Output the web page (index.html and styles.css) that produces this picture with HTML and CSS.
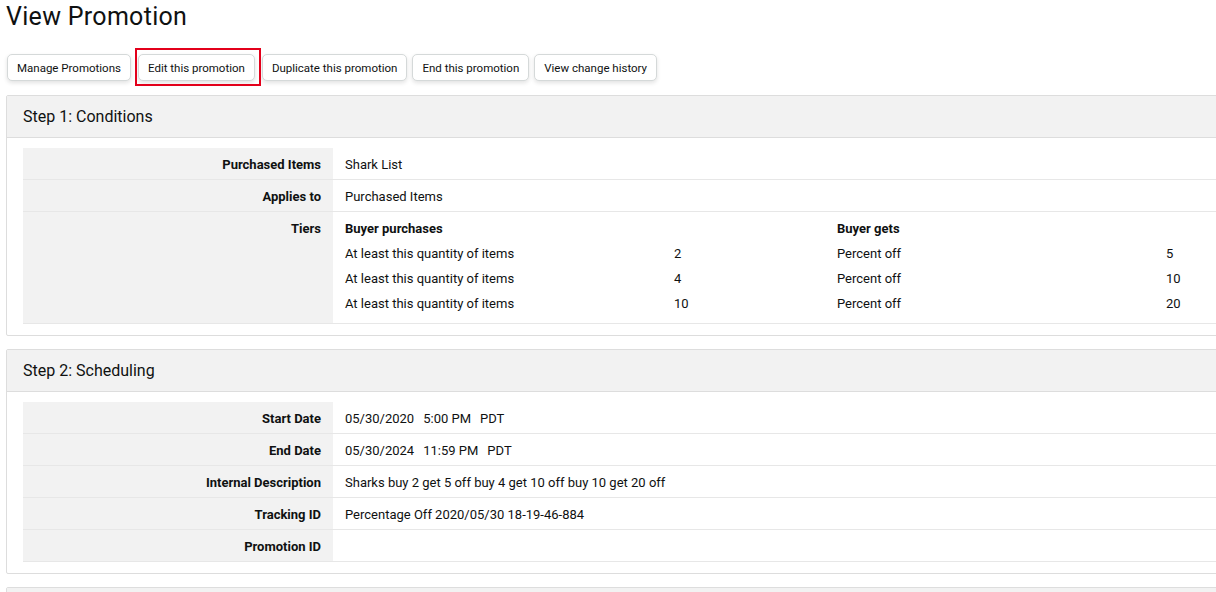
FILE: index.html
```html
<!DOCTYPE html>
<html lang="en">
<head>
    <meta charset="UTF-8">
    <meta name="viewport" content="width=device-width, initial-scale=1.0">
    <title>View Promotion</title>
    <link rel="stylesheet" href="styles.css">
</head>
<body>
    <h1 class="page-title">View Promotion</h1>

    <div class="actions">
        <button class="btn">Manage Promotions</button>
        <span class="highlight"><button class="btn">Edit this promotion</button></span>
        <button class="btn">Duplicate this promotion</button>
        <button class="btn">End this promotion</button>
        <button class="btn">View change history</button>
    </div>

    <div class="card">
        <div class="card-header">Step 1: Conditions</div>
        <table class="details">
            <tr>
                <th>Purchased Items</th>
                <td>Shark List</td>
            </tr>
            <tr>
                <th>Applies to</th>
                <td>Purchased Items</td>
            </tr>
            <tr>
                <th>Tiers</th>
                <td class="tiers-cell">
                    <table class="tiers">
                        <colgroup>
                            <col class="col-name">
                            <col class="col-value">
                            <col class="col-name">
                            <col class="col-value">
                        </colgroup>
                        <tr class="tiers-head">
                            <td colspan="2">Buyer purchases</td>
                            <td colspan="2">Buyer gets</td>
                        </tr>
                        <tr>
                            <td>At least this quantity of items</td>
                            <td>2</td>
                            <td>Percent off</td>
                            <td>5</td>
                        </tr>
                        <tr>
                            <td>At least this quantity of items</td>
                            <td>4</td>
                            <td>Percent off</td>
                            <td>10</td>
                        </tr>
                        <tr>
                            <td>At least this quantity of items</td>
                            <td>10</td>
                            <td>Percent off</td>
                            <td>20</td>
                        </tr>
                    </table>
                </td>
            </tr>
        </table>
    </div>

    <div class="card">
        <div class="card-header">Step 2: Scheduling</div>
        <table class="details">
            <tr>
                <th>Start Date</th>
                <td><span class="part">05/30/2020</span><span class="part">5:00 PM</span><span class="part">PDT</span></td>
            </tr>
            <tr>
                <th>End Date</th>
                <td><span class="part">05/30/2024</span><span class="part">11:59 PM</span><span class="part">PDT</span></td>
            </tr>
            <tr>
                <th>Internal Description</th>
                <td>Sharks buy 2 get 5 off buy 4 get 10 off buy 10 get 20 off</td>
            </tr>
            <tr>
                <th>Tracking ID</th>
                <td>Percentage Off 2020/05/30 18-19-46-884</td>
            </tr>
            <tr>
                <th>Promotion ID</th>
                <td></td>
            </tr>
        </table>
    </div>

    <!-- next step starts just below the fold -->
    <div class="card">
        <div class="card-header"></div>
    </div>
</body>
</html>
```

FILE: styles.css
```css
html, body {
    overflow: hidden;
}

body {
    font-family: Roboto, "Liberation Sans", sans-serif;
    font-size: 13px;
    color: #0f1111;
    background-color: #fff;
    margin: 0;
    padding: 0 6px;
}

.page-title {
    font-size: 25px;
    font-weight: 400;
    letter-spacing: 0.3px;
    line-height: 32px;
    margin: 0;
    padding-top: 1px;
}

.actions {
    display: flex;
    align-items: center;
    gap: 5px;
    margin: 21px 0 14px 1px;
}

.btn {
    font-family: inherit;
    font-size: 11.5px;
    color: #0f1111;
    background-color: #fff;
    height: 27px;
    padding: 0 9px;
    border: 1px solid #d5d9d9;
    border-radius: 5px;
    box-shadow: 0 2px 4px rgba(15, 17, 17, 0.12);
    cursor: pointer;
}

.highlight {
    position: relative;
    display: inline-flex;
    margin: 0 2px;
}

.highlight::after {
    content: "";
    position: absolute;
    top: -6px;
    left: -3px;
    right: -6px;
    bottom: -5px;
    border: 2px solid #e3001b;
    pointer-events: none;
}

.card {
    width: 1400px;
    border: 1px solid #dddddd;
    border-radius: 2px;
    margin-bottom: 13px;
    padding-bottom: 11px;
}

.card-header {
    background-color: #f2f2f2;
    border-bottom: 1px solid #dddddd;
    font-size: 16px;
    height: 41px;
    line-height: 41px;
    padding: 0 16px;
    margin-bottom: 10px;
}

.details {
    width: 1368px;
    margin: 0 16px;
    border-collapse: collapse;
}

.details th,
.details > tbody > tr > td {
    border-bottom: 1px solid #e7e7e7;
    padding: 9px 12px 7px;
    line-height: 15px;
    vertical-align: top;
}

.details th {
    width: 286px;
    background-color: #f2f2f2;
    text-align: right;
    font-weight: 700;
}

.details td {
    text-align: left;
}

.details .tiers-cell {
    padding: 4px 12px 7px;
}

.tiers {
    border-collapse: collapse;
    table-layout: fixed;
}

.tiers td {
    padding: 0;
    line-height: 25px;
}

.tiers .col-name {
    width: 329px;
}

.tiers .col-value {
    width: 163px;
}

.tiers-head td {
    font-weight: 700;
}

.part {
    margin-right: 9px;
}
```
